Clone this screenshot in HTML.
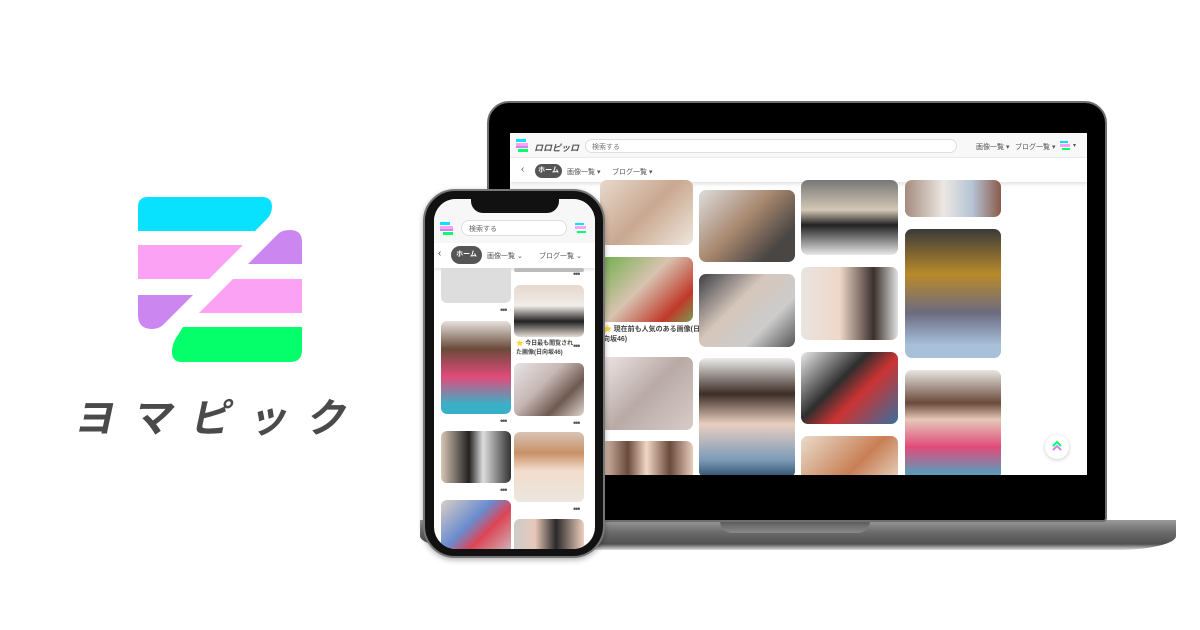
<!DOCTYPE html>
<html><head><meta charset="utf-8"><style>
*{margin:0;padding:0;box-sizing:border-box}
body{width:1200px;height:630px;background:#fff;position:relative;overflow:hidden;font-family:"Liberation Sans","Noto Sans CJK JP",sans-serif}
.a{position:absolute}
.t{position:absolute;border-radius:7px;overflow:hidden}
.pt{position:absolute;border-radius:6px}
.dots{position:absolute;font-size:9px;color:#555;letter-spacing:-1px;line-height:6px}
</style></head><body>

<!-- Logo -->
<svg class="a" style="left:0;top:0" width="420" height="460">
<path d="M148 197 H262 Q272 197 272 207 Q272 214 266 220 L255 231 H138 V207 Q138 197 148 197Z" fill="#08e2ff"/>
<polygon points="138,245 243,245 209,279 138,279" fill="#fca2f4"/>
<path d="M248 264 L279 233 Q283 230 290 230 Q302 230 302 242 V264Z" fill="#cc86f0"/>
<polygon points="233,279 302,279 302,313 199,313" fill="#fca2f4"/>
<path d="M138 295 H193 L165 323 Q160 329 152 329 Q138 329 138 315Z" fill="#cc86f0"/>
<path d="M183 327 H302 V350 Q302 362 290 362 H182 Q172 362 172 352 Q172 344 176 338Z" fill="#05ff6a"/>
<text x="222" y="432" text-anchor="middle" font-family="Noto Sans CJK JP,sans-serif" font-weight="700" font-size="40" fill="#4a4a4a" transform="skewX(-12) translate(88,0)" letter-spacing="18">ヨマピック</text>
</svg>

<!-- Laptop base -->
<div class="a" style="left:420px;top:520px;width:756px;height:30px;background:linear-gradient(#9a9a9a,#6c6c6c 40%,#505050 80%,#ddd);border-radius:0 0 60px 60px/0 0 14px 14px"></div>
<div class="a" style="left:720px;top:520px;width:150px;height:13px;background:linear-gradient(#555,#8a8a8a);border-radius:0 0 12px 12px"></div>
<!-- Laptop lid -->
<div class="a" style="left:487px;top:101px;width:620px;height:421px;background:#000;border:2px solid #6e6e6e;border-radius:22px 22px 4px 4px"></div>
<!-- Screen -->
<div class="a" style="left:510px;top:133px;width:577px;height:342px;background:#fff;overflow:hidden">
  <div class="a" style="left:0;top:0;width:577px;height:25px;background:#f8f8f9;border-bottom:1px solid #eee"></div>
  <svg class="a" style="left:6px;top:6px" width="12" height="13"><rect x="0" y="0" width="10" height="3" fill="#08e2ff"/><rect x="0" y="4" width="12" height="3" fill="#fca2f4"/><rect x="0" y="7" width="12" height="2" fill="#cc86f0"/><rect x="2" y="10" width="10" height="3" fill="#05ff6a"/></svg>
  <div class="a" style="left:24px;top:8px;font-size:9px;color:#555;font-style:italic;font-weight:bold">ロロピッロ</div>
  <div class="a" style="left:75px;top:6px;width:372px;height:14px;border:1px solid #ddd;border-radius:8px;background:#fff;font-size:7px;color:#777;padding:2px 0 0 6px">検索する</div>
  <div class="a" style="left:466px;top:9px;font-size:7px;color:#555">画像一覧 ▾</div>
  <div class="a" style="left:505px;top:9px;font-size:7px;color:#555">ブログ一覧 ▾</div>
  <svg class="a" style="left:550px;top:8px" width="10" height="10"><rect width="8" height="2" fill="#08e2ff"/><rect y="3" width="10" height="3" fill="#fca2f4"/><rect x="2" y="7" width="8" height="2" fill="#05ff6a"/></svg>
  <div class="a" style="left:563px;top:9px;font-size:6px;color:#555">▾</div>
  <div class="a" style="left:0;top:25px;width:577px;height:24px;background:#fff;box-shadow:0 2px 4px rgba(0,0,0,.12)"></div>
  <div class="a" style="left:11px;top:31px;font-size:10px;color:#555">‹</div>
  <div class="a" style="left:25px;top:31px;width:27px;height:14px;background:#555;border-radius:7px;color:#fff;font-size:7px;font-weight:bold;text-align:center;line-height:14px">ホーム</div>
  <div class="a" style="left:57px;top:34px;font-size:7px;color:#555">画像一覧 ▾</div>
  <div class="a" style="left:102px;top:34px;font-size:7px;color:#555">ブログ一覧 ▾</div>
</div>
<!-- laptop tiles -->
<div class="t" style="left:600px;top:180px;width:93px;height:65px;background:linear-gradient(135deg,#e8d8cc,#c9a890 50%,#efe6dc)"></div>
<div class="t" style="left:600px;top:257px;width:93px;height:65px;background:linear-gradient(135deg,#6fae4a,#d8c3b0 45%,#c0392b 80%,#7a9a50)"></div>
<div class="a" style="left:603px;top:325px;font-size:7px;color:#444;line-height:10px;font-weight:bold">⭐ 現在前も人気のある画像(日<br>向坂46)</div>
<div class="t" style="left:600px;top:357px;width:93px;height:73px;background:linear-gradient(135deg,#efe7e6,#b9aaa6 50%,#d8ccc8)"></div>
<div class="t" style="left:600px;top:441px;width:93px;height:40px;background:linear-gradient(90deg,#e8cdbd,#6a4a3a 30%,#f1d7c5 50%,#6a4a3a 75%,#e8cdbd)"></div>

<div class="t" style="left:699px;top:190px;width:96px;height:72px;background:linear-gradient(135deg,#ddd,#a8876e 45%,#4a4644 80%)"></div>
<div class="t" style="left:699px;top:274px;width:96px;height:73px;background:linear-gradient(135deg,#3c3f45,#d6c6bb 40%,#ccc 70%,#555)"></div>
<div class="t" style="left:699px;top:358px;width:96px;height:120px;background:linear-gradient(180deg,#ececec,#3c2d25 30%,#e9cfc0 55%,#7b9bb8 85%,#2f4d6b)"></div>

<div class="t" style="left:801px;top:180px;width:97px;height:75px;background:linear-gradient(180deg,#777,#d4c8b6 40%,#222 60%,#e8e8e8)"></div>
<div class="t" style="left:801px;top:267px;width:97px;height:73px;background:linear-gradient(90deg,#e9e4e0,#efd8c8 40%,#3b302c 75%,#e2e2e2)"></div>
<div class="t" style="left:801px;top:352px;width:97px;height:72px;background:linear-gradient(135deg,#e9e9e9,#2e2e2e 40%,#c33 60%,#3a6f9d)"></div>
<div class="t" style="left:801px;top:436px;width:97px;height:45px;background:linear-gradient(135deg,#eadccb,#c87f55 60%,#e6d3c0)"></div>

<div class="t" style="left:905px;top:180px;width:96px;height:37px;background:linear-gradient(90deg,#a48c7e,#ece7e2 40%,#b5c4d6 70%,#8a5a4a)"></div>
<div class="t" style="left:905px;top:229px;width:96px;height:129px;background:linear-gradient(180deg,#3a3a3a,#b98a2a 35%,#6b6b80 65%,#a8c0da 90%)"></div>
<div class="t" style="left:905px;top:370px;width:96px;height:110px;background:linear-gradient(180deg,#e8e6e2,#6a4a3a 30%,#e6c8b8 45%,#e14b7a 70%,#3ab0c8)"></div>
<div class="a" style="left:510px;top:475px;width:577px;height:8px;background:#000"></div>
<!-- scroll top button -->
<div class="a" style="left:1045px;top:435px;width:24px;height:24px;border-radius:50%;background:#fff;box-shadow:0 1px 4px rgba(0,0,0,.2)"></div>
<svg class="a" style="left:1050px;top:439px" width="14" height="14"><path d="M3 7 L7 3 L11 7" stroke="#05ff6a" stroke-width="2" fill="none"/><path d="M3 11 L7 7 L11 11" stroke="#cc86f0" stroke-width="2" fill="none"/></svg>

<!-- Phone -->
<div class="a" style="left:423px;top:189px;width:182px;height:369px;background:#111;border:2px solid #777;border-radius:32px;box-shadow:0 2px 6px rgba(0,0,0,.3)"></div>
<div class="a" style="left:434px;top:199px;width:161px;height:350px;background:#fff;border-radius:22px;overflow:hidden">
  <div class="a" style="left:0;top:0;width:161px;height:44px;background:#f7f7f8"></div>
  <div class="a" style="left:0;top:44px;width:161px;height:25px;background:#fff;box-shadow:0 2px 3px rgba(0,0,0,.1)"></div>
  <div class="pt" style="left:7px;top:69px;width:70px;height:35px;background:#ddd;border-radius:0 0 6px 6px"></div>
  <div class="pt" style="left:80px;top:69px;width:70px;height:4px;background:#bbb"></div>
  <div class="pt" style="left:7px;top:122px;width:70px;height:93px;background:linear-gradient(180deg,#e6e2de,#6a4a3a 30%,#e14b7a 60%,#3ab0c8 90%)"></div>
  <div class="pt" style="left:7px;top:232px;width:70px;height:52px;background:linear-gradient(90deg,#d7c6b6,#222 40%,#ddd 60%,#333)"></div>
  <div class="pt" style="left:7px;top:301px;width:70px;height:60px;background:linear-gradient(135deg,#d9cfc6,#6a8ccf 40%,#d45 60%,#ccc)"></div>
  <div class="pt" style="left:80px;top:86px;width:70px;height:52px;background:linear-gradient(180deg,#e6d8cc,#f0ece8 40%,#222 70%,#e6dcd5)"></div>
  <div class="a" style="left:82px;top:141px;font-size:6px;line-height:9px;color:#444;font-weight:bold">⭐ 今日最も閲覧され<br>た画像(日向坂46)</div>
  <div class="pt" style="left:80px;top:164px;width:70px;height:53px;background:linear-gradient(135deg,#e8e4e6,#c7b7b5 40%,#6e5a50 70%,#e0d6d0)"></div>
  <div class="pt" style="left:80px;top:233px;width:70px;height:70px;background:linear-gradient(180deg,#d8c4b4,#c89068 30%,#f2dccc 55%,#ece6de)"></div>
  <div class="pt" style="left:80px;top:320px;width:70px;height:40px;background:linear-gradient(90deg,#ccc,#e8c8b8 30%,#2a2a2a 60%,#f0d0c0)"></div>
  <div class="dots" style="left:66px;top:108px">•••</div>
  <div class="dots" style="left:139px;top:72px">•••</div>
  <div class="dots" style="left:139px;top:144px">•••</div>
  <div class="dots" style="left:66px;top:219px">•••</div>
  <div class="dots" style="left:139px;top:221px">•••</div>
  <div class="dots" style="left:66px;top:288px">•••</div>
  <div class="dots" style="left:139px;top:307px">•••</div>
  <!-- header -->
  <svg class="a" style="left:6px;top:23px" width="13" height="13"><rect width="10" height="3" fill="#08e2ff"/><rect y="4" width="13" height="3" fill="#fca2f4"/><rect y="7" width="13" height="2" fill="#cc86f0"/><rect x="3" y="10" width="10" height="3" fill="#05ff6a"/></svg>
  <div class="a" style="left:27px;top:21px;width:106px;height:16px;border:1px solid #ddd;border-radius:8px;background:#fff;font-size:7px;color:#666;padding:3px 0 0 7px">検索する</div>
  <svg class="a" style="left:141px;top:24px" width="11" height="11"><rect width="9" height="2" fill="#08e2ff"/><rect y="3" width="11" height="3" fill="#fca2f4"/><rect x="2" y="8" width="9" height="2" fill="#05ff6a"/></svg>
  <div class="a" style="left:4px;top:49px;font-size:10px;color:#444">‹</div>
  <div class="a" style="left:17px;top:47px;width:31px;height:18px;background:#555;border-radius:9px;color:#fff;font-size:7px;font-weight:bold;text-align:center;line-height:18px">ホーム</div>
  <div class="a" style="left:53px;top:52px;font-size:7px;color:#555">画像一覧 ⌄</div>
  <div class="a" style="left:105px;top:52px;font-size:7px;color:#555">ブログ一覧 ⌄</div>
  <!-- notch -->
  <div class="a" style="left:37px;top:0;width:88px;height:14px;background:#111;border-radius:0 0 12px 12px"></div>
</div>
</body></html>
